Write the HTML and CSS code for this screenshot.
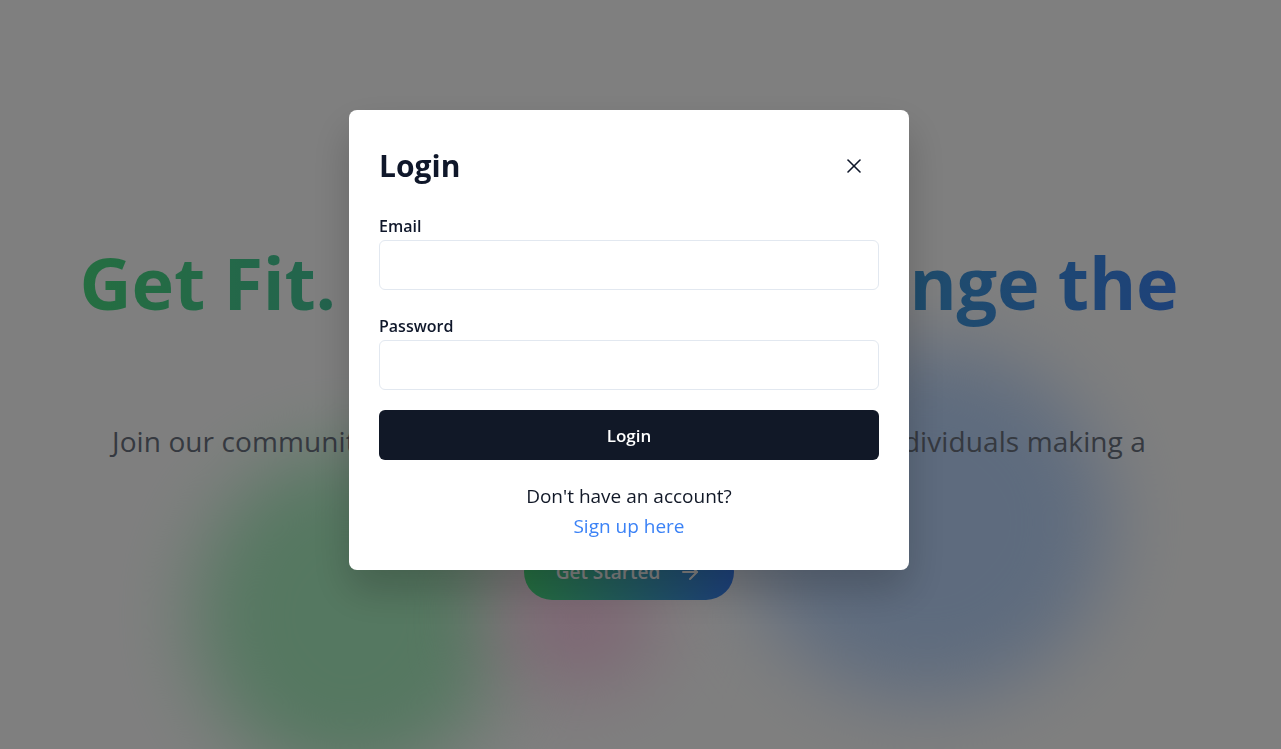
FILE: index.html
```html
<!DOCTYPE html>
<html lang="en">
<head>
<meta charset="utf-8">
<title>Login</title>
<link rel="stylesheet" href="styles.css">
</head>
<body>
<main class="hero">
  <div class="blob blob-green"></div>
  <div class="blob blob-pink"></div>
  <div class="blob blob-blue"></div>
  <div class="hero-content">
    <h1 class="hero-title">Get Fit. Live Green. Change the World.</h1>
    <p class="hero-text">Join our community of fitness lovers and planet-conscious individuals making a difference, one step at a time.</p>
    <a class="cta" href="#">Get Started
      <svg class="cta-icon" viewBox="0 0 24 24" width="24" height="24" fill="none" stroke="currentColor" stroke-width="2" stroke-linecap="round" stroke-linejoin="round"><path d="M5 12h14"/><path d="m12 5 7 7-7 7"/></svg>
    </a>
  </div>
</main>

<div class="overlay">
  <div class="modal" role="dialog" aria-labelledby="login-title">
    <div class="modal-header">
      <h2 class="modal-title" id="login-title">Login</h2>
      <button class="close-btn" type="button" aria-label="Close">
        <svg viewBox="0 0 24 24" width="24" height="24" fill="none" stroke="currentColor" stroke-width="1.6" stroke-linecap="round" stroke-linejoin="round"><path d="M18 6 6 18"/><path d="m6 6 12 12"/></svg>
      </button>
    </div>
    <form class="form">
      <div class="field">
        <label class="label" for="email">Email</label>
        <input class="input" id="email" type="email">
      </div>
      <div class="field field-gap">
        <label class="label" for="password">Password</label>
        <input class="input" id="password" type="password">
      </div>
      <button class="submit" type="button">Login</button>
    </form>
    <div class="modal-footer">
      <p class="footer-text">Don't have an account?</p>
      <a class="footer-link" href="#">Sign up here</a>
    </div>
  </div>
</div>
</body>
</html>
```

FILE: styles.css
```css
* { box-sizing: border-box; }

html, body {
  margin: 0;
  padding: 0;
  background: #ffffff;
  font-family: "Open Sans", "Noto Sans", sans-serif;
}

.hero {
  position: relative;
  width: 1258px;
  height: 749px;
  overflow: hidden;
  text-align: center;
}

.blob {
  position: absolute;
  border-radius: 50%;
  filter: blur(40px);
}

.blob-green {
  left: 195px;
  top: 450px;
  width: 310px;
  height: 330px;
  background: #abf0c2;
}

.blob-pink {
  left: 495px;
  top: 545px;
  width: 165px;
  height: 145px;
  background: #fbcfe8;
}

.blob-blue {
  left: 745px;
  top: 345px;
  width: 365px;
  height: 355px;
  background: #bcd7fd;
}

.hero-content {
  position: relative;
  padding-top: 242px;
}

.hero-title {
  margin: 0 auto 19px;
  max-width: 1140px;
  font-size: 72px;
  line-height: 80px;
  font-weight: 700;
  letter-spacing: -0.2px;
  background: linear-gradient(90deg, #4ade80, #3b82f6);
  -webkit-background-clip: text;
  background-clip: text;
  color: transparent;
}

.hero-text {
  margin: 0 auto 43px;
  max-width: 1070px;
  font-size: 28px;
  line-height: 40px;
  letter-spacing: 0.1px;
  color: #6b7280;
}

.cta {
  display: inline-flex;
  align-items: center;
  gap: 18px;
  height: 56px;
  padding: 0 32px;
  border-radius: 9999px;
  background: linear-gradient(90deg, #4ade80, #3b82f6);
  color: #ffffff;
  font-size: 19px;
  font-weight: 600;
  text-decoration: none;
}

.overlay {
  position: fixed;
  inset: 0;
  display: flex;
  justify-content: center;
  align-items: flex-start;
  padding-top: 110px;
  padding-right: 23px;
  background: rgba(0, 0, 0, 0.5);
}

.modal {
  width: 560px;
  padding: 38px 30px 29px;
  background: #ffffff;
  border-radius: 8px;
  box-shadow: 0 20px 40px rgba(0, 0, 0, 0.2);
}

.modal-header {
  display: flex;
  align-items: center;
  justify-content: space-between;
  margin-bottom: 30px;
}

.modal-title {
  margin: 0;
  font-size: 30px;
  line-height: 36px;
  font-weight: 700;
  color: #0f172a;
}

.close-btn {
  display: flex;
  width: 24px;
  height: 24px;
  padding: 0;
  margin-right: 13px;
  border: 0;
  background: transparent;
  color: #0f172a;
}

.form {
  display: flex;
  flex-direction: column;
}

.field {
  display: flex;
  flex-direction: column;
  gap: 2px;
}

.field-gap {
  margin-top: 24px;
}

.label {
  font-size: 16px;
  line-height: 24px;
  font-weight: 600;
  color: #0f172a;
}

.input {
  height: 50px;
  width: 100%;
  border: 1px solid #e2e8f0;
  border-radius: 6px;
  background: #ffffff;
  font: inherit;
}

.submit {
  margin-top: 20px;
  height: 50px;
  border: 0;
  border-radius: 6px;
  background: #111827;
  color: #ffffff;
  font-family: inherit;
  font-size: 17px;
  font-weight: 600;
}

.modal-footer {
  margin-top: 21px;
  text-align: center;
  font-size: 19px;
  line-height: 30px;
}

.footer-text {
  margin: 0;
  color: #111827;
}

.footer-link {
  color: #3b82f6;
  text-decoration: none;
}
```
